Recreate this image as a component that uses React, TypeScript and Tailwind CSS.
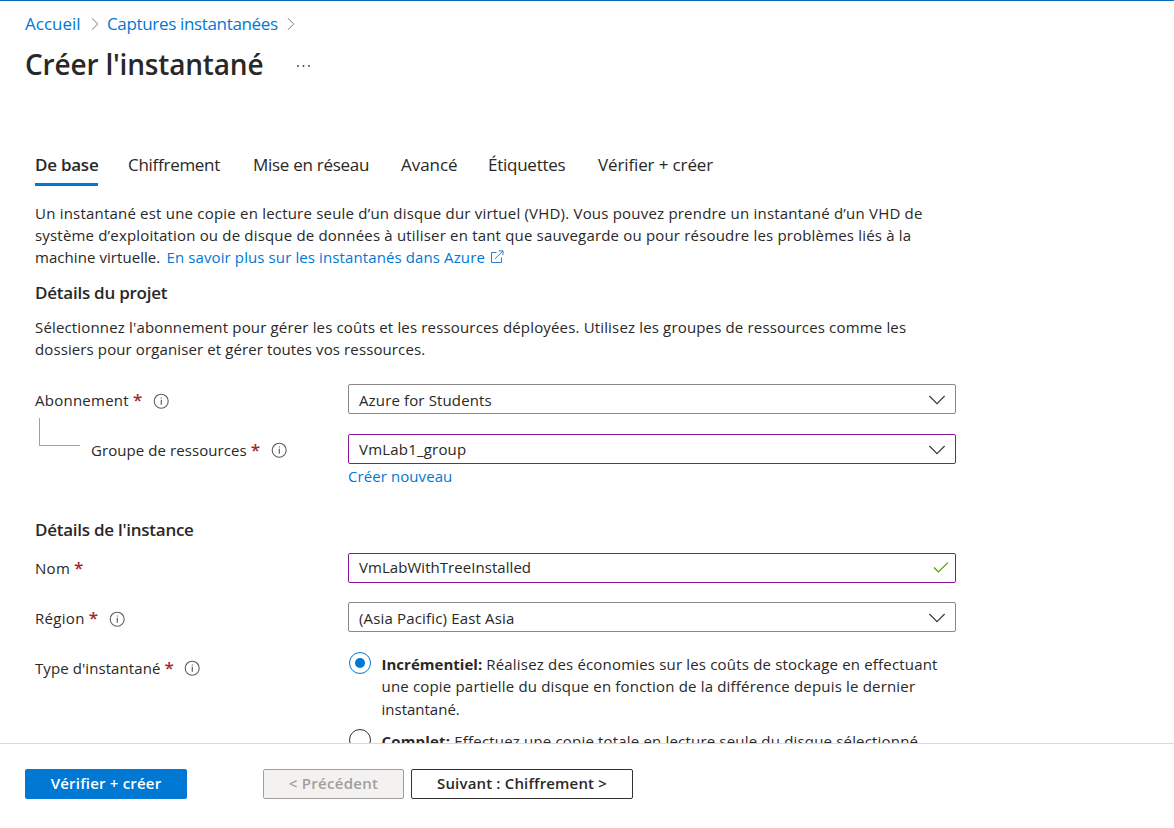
import type { ReactNode } from "react";

function Chevron({ className = "" }: { className?: string }) {
  return (
    <svg className={className} width="8" height="14" viewBox="0 0 8 14" fill="none" stroke="#7a7a7a" strokeWidth="1">
      <path d="M0.8 1.2 L6.8 7 L0.8 12.8" />
    </svg>
  );
}

function Info({ className = "" }: { className?: string }) {
  return (
    <svg className={className} width="16" height="16" viewBox="0 0 16 16" fill="none" stroke="#605e5c">
      <circle cx="8.2" cy="8.2" r="7" strokeWidth="1.1" />
      <path d="M8.3 6.7 V11.8" strokeWidth="1.2" />
      <path d="M8.3 4.4 V5.6" strokeWidth="1.2" />
    </svg>
  );
}

function Down() {
  return (
    <svg width="18" height="10" viewBox="0 0 18 10" fill="none" stroke="#3b3a39" strokeWidth="1.2">
      <path d="M1.4 1 L9 8.6 L16.6 1" />
    </svg>
  );
}

function Label({ text, info, spacing = "" }: { text: string; info?: string; spacing?: string }) {
  return (
    <div className="flex h-[22px] items-center whitespace-nowrap">
      <span className={spacing}>{text}</span>
      <span className="ml-[4px] w-[9px] pb-px text-[17px] font-semibold text-[#a4262c]">*</span>
      {info && <Info className={info} />}
    </div>
  );
}

function Field({ border, children, icon }: { border: string; children: ReactNode; icon: ReactNode }) {
  return (
    <div className={`flex h-[30px] w-[608px] items-center justify-between rounded-[2px] border pl-[10px] ${border}`}>
      {children}
      {icon}
    </div>
  );
}

const selectIcon = (
  <span className="mt-[2px] mr-[9px]">
    <Down />
  </span>
);

export default function App() {
  return (
    <div className="flex h-[828px] w-[1174px] flex-col overflow-hidden border-t border-[#0f6cbd] bg-white font-['Open_Sans','Noto_Sans',sans-serif] text-[15px] leading-[22px] text-[#292827]">
      <header className="pl-[25px]">
        <nav className="flex h-[45px] items-center text-[17px] whitespace-nowrap text-[#0078d4]">
          <span className="w-[66px]">Accueil</span>
          <Chevron />
          <span className="ml-[8px] w-[180px] tracking-[-0.34px]">Captures instantanées</span>
          <Chevron />
        </nav>
        <div className="flex h-[38px] items-center">
          <h1 className="w-[271px] pb-[2px] text-[28px] leading-[36px] font-semibold tracking-[-0.18px] whitespace-nowrap">Créer l'instantané</h1>
          <svg className="mt-[2px]" width="15" height="4" viewBox="0 0 15 4" fill="#3b3a39">
            <circle cx="2" cy="2" r="0.9" />
            <circle cx="7.5" cy="2" r="0.9" />
            <circle cx="13" cy="2" r="0.9" />
          </svg>
        </div>
      </header>

      <main className="flex h-[659px] flex-col overflow-hidden pl-[35px]">
        <div className="mt-[68px] flex h-[34px] shrink-0 items-start text-[17px] leading-[25px] whitespace-nowrap">
          <div className="mr-[29px] h-[34px] w-[63px] border-b-[3px] border-[#0078d4] font-semibold tracking-[-0.25px]">De base</div>
          <div className="w-[125px] pl-px tracking-[-0.28px]">Chiffrement</div>
          <div className="w-[149px] pl-px tracking-[-0.28px]">Mise en réseau</div>
          <div className="w-[86px] tracking-[-0.05px]">Avancé</div>
          <div className="w-[110px] pl-px tracking-[-0.25px]">Étiquettes</div>
          <div className="pl-px tracking-[-0.13px]">Vérifier + créer</div>
        </div>

        <div className="mt-[16px] shrink-0 whitespace-nowrap">
          <p className="tracking-[0.205px]">Un instantané est une copie en lecture seule d’un disque dur virtuel (VHD). Vous pouvez prendre un instantané d’un VHD de</p>
          <p className="tracking-[0.18px]">système d’exploitation ou de disque de données à utiliser en tant que sauvegarde ou pour résoudre les problèmes liés à la</p>
          <p className="flex items-center">
            <span className="w-[131.5px] tracking-[0.06px]">machine virtuelle.</span>
            <span className="tracking-[0.11px] text-[#0078d4]">En savoir plus sur les instantanés dans Azure</span>
            <svg className="ml-[5px]" width="14" height="14" viewBox="0 0 14 14" fill="none" stroke="#2b7cd3" strokeWidth="1">
              <path d="M6.5 2.5 H1.5 V12.5 H11.5 V7.5" />
              <path d="M4.9 8.9 L13 0.9 M8.8 0.9 H13 V5.1" />
            </svg>
          </p>
        </div>

        <h2 className="mt-[13px] shrink-0 text-[17px] leading-[23px] font-semibold tracking-[-0.24px]">Détails du projet</h2>

        <div className="mt-[12px] shrink-0 whitespace-nowrap">
          <p className="tracking-[0.16px]">Sélectionnez l'abonnement pour gérer les coûts et les ressources déployées. Utilisez les groupes de ressources comme les</p>
          <p className="tracking-[0.11px]">dossiers pour organiser et gérer toutes vos ressources.</p>
        </div>

        <div className="mt-[24px] grid shrink-0 grid-cols-[313px_608px] gap-y-[20px]">
          <div className="pt-[5px]">
            <Label text="Abonnement" info="ml-[11px] mt-[2px]" spacing="tracking-[0.25px]" />
            <div className="mt-[7px] -mb-[64px] ml-[4px] h-[28px] w-[41px] border-b border-l border-[#a19f9d]" />
          </div>
          <Field border="border-[#8a8886]" icon={selectIcon}>
            <span className="pt-[2px] tracking-[0.14px]">Azure for Students</span>
          </Field>
          <div className="pt-[5px] pl-[56px]">
            <Label text="Groupe de ressources" info="ml-[11px]" spacing="tracking-[0.08px]" />
          </div>
          <Field border="border-[#881798]" icon={selectIcon}>
            <span className="tracking-[0.2px]">VmLab1_group</span>
          </Field>
        </div>
        <div className="mt-px ml-[313px] shrink-0 tracking-[0.08px] text-[#0078d4]">Créer nouveau</div>

        <h2 className="mt-[32px] shrink-0 text-[17px] leading-[22px] font-semibold tracking-[-0.26px]">Détails de l'instance</h2>

        <div className="mt-[12px] grid shrink-0 grid-cols-[313px_608px]">
          <div className="pt-[4px]">
            <Label text="Nom" spacing="tracking-[0.3px]" />
          </div>
          <Field
            border="border-[#881798]"
            icon={
              <svg className="mr-[6px]" width="16" height="12" viewBox="0 0 16 12" fill="none" stroke="#57a300" strokeWidth="1.3">
                <path d="M1 5.5 L5.4 9.9 L14.8 0.6" />
              </svg>
            }
          >
            <span className="pb-[2px] tracking-[0.05px]">VmLabWithTreeInstalled</span>
          </Field>
          <div className="mt-[19px] pt-[5px]">
            <Label text="Région" info="ml-[11px] mt-px" spacing="tracking-[0.3px]" />
          </div>
          <div className="mt-[19px]">
            <Field border="border-[#8a8886]" icon={selectIcon}>
              <span className="pt-[2px] tracking-[0.16px]">(Asia Pacific) East Asia</span>
            </Field>
          </div>
          <div className="mt-[20px] pt-[5px]">
            <Label text="Type d'instantané" info="ml-[11px]" spacing="tracking-[0.08px]" />
          </div>
          <div className="mt-[20px] pl-px leading-[22.4px] whitespace-nowrap">
            <div className="flex">
              <span className="mr-[10px] flex size-[22px] items-center justify-center rounded-full border border-[#0078d4]">
                <span className="size-[10px] rounded-full bg-[#0078d4]" />
              </span>
              <div className="pt-px pl-[0.5px]">
                <p className="leading-[22px] tracking-[0.18px]">
                  <b className="tracking-[0.02px]">Incrémentiel:</b> Réalisez des économies sur les coûts de stockage en effectuant
                </p>
                <p className="leading-[22px] tracking-[0.18px]">une copie partielle du disque en fonction de la différence depuis le dernier</p>
                <p className="leading-[24px]">instantané.</p>
              </div>
            </div>
            <div className="mt-[8px] flex">
              <span className="mr-[10px] size-[22px] rounded-full border border-[#323130]" />
              <p className="pt-px pl-[0.5px] tracking-[0.18px]">
                <b>Complet:</b> Effectuez une copie totale en lecture seule du disque sélectionné.
              </p>
            </div>
          </div>
        </div>
      </main>

      <footer className="flex h-[85px] shrink-0 items-start border-t border-[#dcdbda] pt-[25px] pl-[25px] font-semibold whitespace-nowrap">
        <button className="h-[30px] w-[162px] rounded-[2px] bg-[#0078d4] pb-[2px] tracking-[0.2px] text-white">Vérifier + créer</button>
        <button className="ml-[76px] h-[30px] w-[141px] rounded-[2px] border border-[#a19f9d] bg-[#f3f2f1] pb-[2px] tracking-[0.3px] text-[#a19f9d]">&lt; Précédent</button>
        <button className="ml-[7px] h-[30px] w-[222px] rounded-[2px] border border-[#323130] bg-white pb-[2px] tracking-[0.17px]">Suivant : Chiffrement &gt;</button>
      </footer>
    </div>
  );
}
